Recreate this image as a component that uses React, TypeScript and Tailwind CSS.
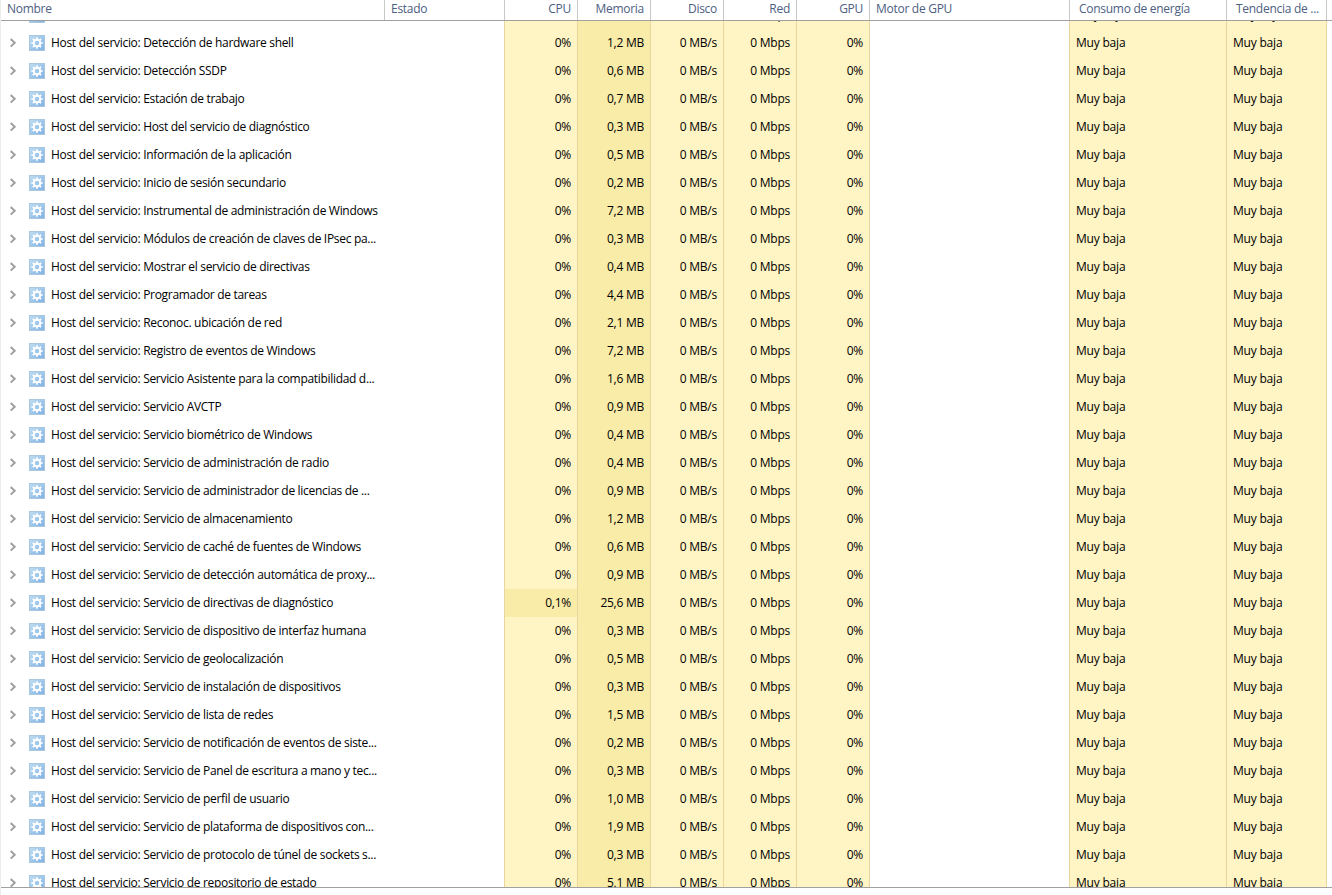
import clsx from "clsx";

/** Una fila de la lista de procesos */
type Proceso = {
  nombre: string;
  memoria: string;
  cpu?: string;
};

const PREFIJO = "Host del servicio: ";

const procesos: Proceso[] = [
  { nombre: "Cliente DNS", memoria: "0,9 MB" },
  { nombre: "Detección de hardware shell", memoria: "1,2 MB" },
  { nombre: "Detección SSDP", memoria: "0,6 MB" },
  { nombre: "Estación de trabajo", memoria: "0,7 MB" },
  { nombre: "Host del servicio de diagnóstico", memoria: "0,3 MB" },
  { nombre: "Información de la aplicación", memoria: "0,5 MB" },
  { nombre: "Inicio de sesión secundario", memoria: "0,2 MB" },
  { nombre: "Instrumental de administración de Windows", memoria: "7,2 MB" },
  { nombre: "Módulos de creación de claves de IPsec pa...", memoria: "0,3 MB" },
  { nombre: "Mostrar el servicio de directivas", memoria: "0,4 MB" },
  { nombre: "Programador de tareas", memoria: "4,4 MB" },
  { nombre: "Reconoc. ubicación de red", memoria: "2,1 MB" },
  { nombre: "Registro de eventos de Windows", memoria: "7,2 MB" },
  { nombre: "Servicio Asistente para la compatibilidad d...", memoria: "1,6 MB" },
  { nombre: "Servicio AVCTP", memoria: "0,9 MB" },
  { nombre: "Servicio biométrico de Windows", memoria: "0,4 MB" },
  { nombre: "Servicio de administración de radio", memoria: "0,4 MB" },
  { nombre: "Servicio de administrador de licencias de ...", memoria: "0,9 MB" },
  { nombre: "Servicio de almacenamiento", memoria: "1,2 MB" },
  { nombre: "Servicio de caché de fuentes de Windows", memoria: "0,6 MB" },
  { nombre: "Servicio de detección automática de proxy...", memoria: "0,9 MB" },
  { nombre: "Servicio de directivas de diagnóstico", memoria: "25,6 MB", cpu: "0,1%" },
  { nombre: "Servicio de dispositivo de interfaz humana", memoria: "0,3 MB" },
  { nombre: "Servicio de geolocalización", memoria: "0,5 MB" },
  { nombre: "Servicio de instalación de dispositivos", memoria: "0,3 MB" },
  { nombre: "Servicio de lista de redes", memoria: "1,5 MB" },
  { nombre: "Servicio de notificación de eventos de siste...", memoria: "0,2 MB" },
  { nombre: "Servicio de Panel de escritura a mano y tec...", memoria: "0,3 MB" },
  { nombre: "Servicio de perfil de usuario", memoria: "1,0 MB" },
  { nombre: "Servicio de plataforma de dispositivos con...", memoria: "1,9 MB" },
  { nombre: "Servicio de protocolo de túnel de sockets s...", memoria: "0,3 MB" },
  { nombre: "Servicio de repositorio de estado", memoria: "5,1 MB" },
];

/** Columnas compartidas por la cabecera y las filas */
const COLUMNAS = "grid grid-cols-[383px_120px_repeat(5,73px)_200px_157px_100px_1fr]";

const cabecera = [
  { texto: "Nombre", clase: "pl-1.5" },
  { texto: "Estado", clase: "border-l pl-1.5" },
  { texto: "CPU", clase: "border-l pr-1.5 text-right" },
  { texto: "Memoria", clase: "border-l pr-1.5 text-right" },
  { texto: "Disco", clase: "border-l pr-1.5 text-right" },
  { texto: "Red", clase: "border-l pr-1.5 text-right" },
  { texto: "GPU", clase: "border-l pr-1.5 text-right" },
  { texto: "Motor de GPU", clase: "border-l pl-1.5" },
  { texto: "Consumo de energía", clase: "border-l pl-[9px]" },
  { texto: "Tendencia de ...", clase: "border-l pl-[9px]" },
  { texto: "", clase: "border-l" },
];

function Flecha() {
  return (
    <svg className="ml-2 h-4 w-2 shrink-0" viewBox="0 0 8 16" fill="none">
      <path d="M1.7 4 5.7 7.8 1.7 11.6" stroke="#a0a0a0" strokeWidth="2" />
    </svg>
  );
}

/** Engranaje blanco sobre cuadro azul */
function IconoServicio() {
  return (
    <svg className="ml-3 h-4 w-4 shrink-0" viewBox="0 0 16 16">
      <defs>
        <linearGradient id="azul" x1="0" y1="0" x2="1" y2="1">
          <stop offset="0" stopColor="#bfdff2" />
          <stop offset="1" stopColor="#7fb0e4" />
        </linearGradient>
      </defs>
      <rect x="0.5" y="0.5" width="15" height="15" fill="url(#azul)" stroke="#a9c8e0" />
      <g stroke="#fff" strokeWidth="1.7">
        <path d="M8 2.2v2.6M8 11.2v2.6M2.2 8h2.6M11.2 8h2.6M3.9 3.9l1.8 1.8M10.3 10.3l1.8 1.8M12.1 3.9l-1.8 1.8M5.7 10.3l-1.8 1.8" />
      </g>
      <circle cx="8" cy="8" r="3.3" fill="none" stroke="#fff" strokeWidth="2" />
    </svg>
  );
}

function Valor({ texto, intenso = false }: { texto: string; intenso?: boolean }) {
  return (
    <div
      className={clsx(
        "border-l border-[#e9d69f] pr-1.5 text-right tracking-[-0.25px]",
        intenso ? "bg-[#f9eca8]" : "bg-[#fff4c4]"
      )}
    >
      {texto}
    </div>
  );
}

/** Celda de consumo o tendencia de energía */
function Energia() {
  return (
    <div className="border-l border-[#e9d69f] bg-[#fff4c4] pl-1.5 tracking-[-0.2px]">Muy baja</div>
  );
}

function Fila({ nombre, memoria, cpu }: Proceso) {
  return (
    <div className={clsx(COLUMNAS, "h-7 leading-7 whitespace-nowrap")}>
      <div className="flex items-center">
        <Flecha />
        <IconoServicio />
        <span className="ml-1.5 tracking-[-0.31px]">{PREFIJO + nombre}</span>
      </div>
      <div />
      <Valor texto={cpu ?? "0%"} intenso={Boolean(cpu)} />
      <Valor texto={memoria} intenso />
      <Valor texto="0 MB/s" />
      <Valor texto="0 Mbps" />
      <Valor texto="0%" />
      <div className="border-l border-[#e9d69f]" />
      <Energia />
      <Energia />
      <div className="border-l border-[#e9d69f]" />
    </div>
  );
}

export default function App() {
  return (
    <div className="h-[895px] w-[1332px] overflow-hidden border-l border-[#ececec] bg-white font-['Open_Sans',sans-serif] text-[12px] text-black">
      <header className={clsx(COLUMNAS, "h-[21px] border-b border-[#a0a0a0] leading-[18px] tracking-[-0.28px] text-[#4c607f]")}>
        {cabecera.map((c, i) => (
          <div key={i} className={clsx("border-[#c8c8c8] whitespace-nowrap", c.clase)}>
            {c.texto}
          </div>
        ))}
      </header>

      {/* La lista está desplazada: la primera y la última fila quedan cortadas */}
      <main className="h-[867px] overflow-hidden border-b border-[#a0a0a0]">
        <div className="-mt-5">
          {procesos.map((p) => (
            <Fila key={p.nombre} {...p} />
          ))}
        </div>
      </main>
    </div>
  );
}
